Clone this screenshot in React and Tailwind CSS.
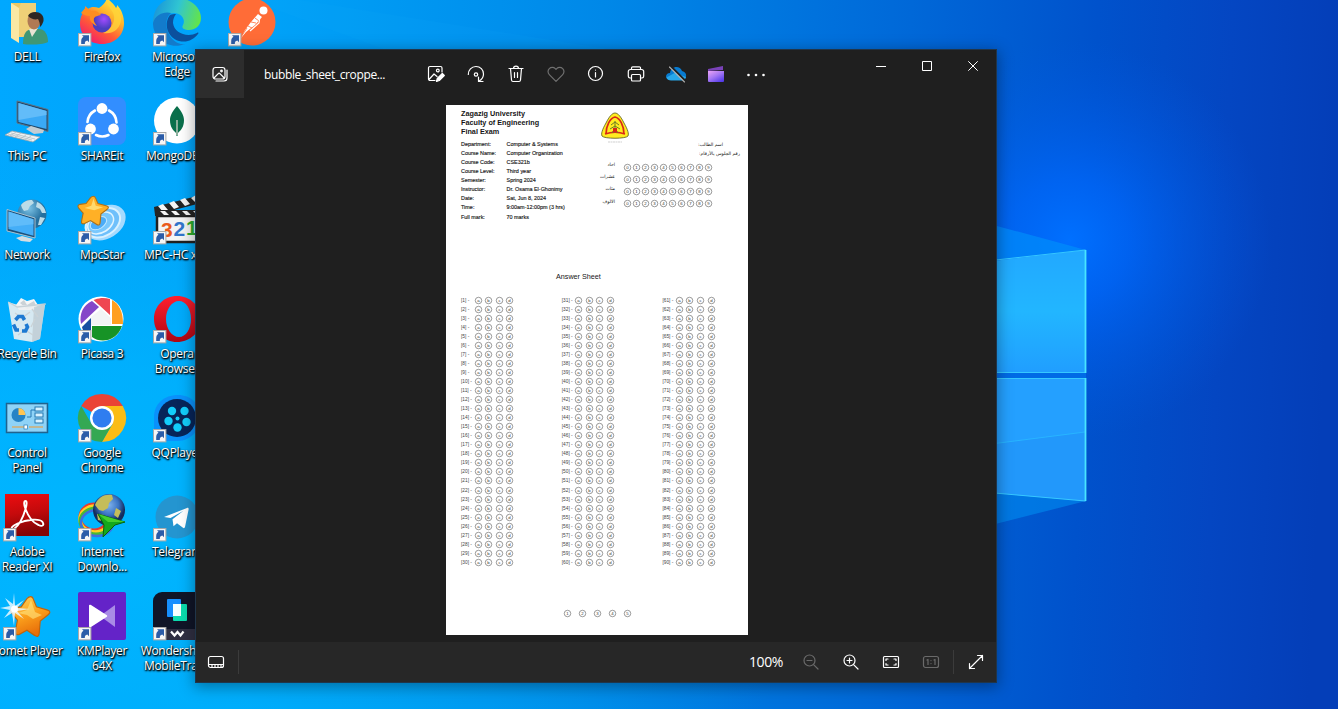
import React from "react";

const Svg48 = ({ children, shortcut }) => (
  <svg viewBox="0 0 48 48" className="h-12 w-12 shrink-0 overflow-visible">
    {children}
    {shortcut && (
      <g>
        <rect x="0.5" y="35.5" width="12.4" height="12.4" fill="#f6f6f6" stroke="#a9a9a9" />
        <path d="M3.200 46V43.500c0-2.600.8-4 2.300-4.700L4 37.300h7v7L9.300 42.600C7.500 43 6.800 44 6.800 46z" fill="#2b5ca8" />
      </g>
    )}
  </svg>
);

const UserFolder = () => (
  <Svg48>
    <path d="M8 5h25v34H14z" fill="#e9c766" />
    <path d="M8 5l8 5v35l-8-5z" fill="#fbe8a4" />
    <path d="M16 10l2-5h15v34H16z" fill="#efd077" />
    <path d="M20 46c0-10 3-15 10-15h6c6 0 9 6 9 13-6 3-19 3-25 2z" fill="#3f9775" />
    <path d="M26 31l3 8 6-9z" fill="#e9e3d4" />
    <ellipse cx="31" cy="23" rx="6.500" ry="8.500" fill="#b07a54" />
    <path d="M25 18c2-6 17-6 15.500 5-1 3-2 5-3.500 6 0-4-1-6-2-8-3 1-7 0-10-3z" fill="#2f2722" />
  </Svg48>
);

const ThisPC = () => (
  <Svg48>
    <path d="M14 4l31 8.500v22L14 26z" fill="#21496b" />
    <path d="M15.500 6l28 8v18L15.500 25z" fill="#3aa9f6" />
    <path d="M15.500 6l28 8v4L15.500 23z" fill="#62bcf9" />
    <path d="M14 4l31 8.500v22L14 26z" fill="none" stroke="#5b7387" />
    <path d="M23 32l5-3 13 4-1 3-9 1z" fill="#c4cdd3" />
    <path d="M2 38l7-4 28 6-7 5z" fill="#eef2f4" stroke="#95a3ab" strokeWidth=".8" />
    <path d="M5 37l24 6M8 36l24 6M13 35l-6 4M18 36l-6 4M23 38l-6 4M28 39l-6 4" stroke="#aeb9bf" strokeWidth=".7" />
  </Svg48>
);

const Network = () => (
  <Svg48>
    <defs>
      <radialGradient id="net" cx=".4" cy=".3">
        <stop offset="0" stopColor="#7cc3e6" />
        <stop offset="1" stopColor="#256f9e" />
      </radialGradient>
    </defs>
    <circle cx="29" cy="18" r="14.500" fill="url(#net)" />
    <path d="M18 9c3-4 7-5 11-5l2 3-4 3-2 4-4 1-2-3zM34 6c5 2 8 6 9 11l-4 0-2-4-4-2zM37 21l5 1-4 7-3 0z" fill="#bcdce8" />
    <path d="M4 13.500l28 8.500v20L4 35z" fill="#1e4f78" stroke="#a9c3d2" />
    <path d="M5.500 15.500l25 7.700v16.500L5.500 33z" fill="#44aef8" />
    <path d="M5.500 15.500l25 7.700v5L5.500 31z" fill="#6cc2fb" opacity=".7" />
    <path d="M13 42l6-2 11 3-3 3-9-1z" fill="#d5dde1" />
  </Svg48>
);

const RecycleBin = () => (
  <Svg48>
    <path d="M13 10l5-7 6 3 7-2 4 6-4 5H16z" fill="#f4f6f7" />
    <path d="M17 8l4-3 3 5 7-4 2 5-9 3z" fill="#cbd2d6" />
    <path d="M5 7l10 3h27l-5 34-8 3-18-3z" fill="#edf0f1" opacity=".9" />
    <path d="M5 7l10 5 31-3" transform="scale(.92 1) translate(.5 0)" fill="none" stroke="#c7d2d8" strokeWidth="1.300" />
    <path d="M31 12l11-3-5 35-8 3z" fill="#b9c5cb" opacity=".65" />
    <path d="M12 18l7 5 8-6M29 14l6 8M15 40l7-5 8 5M32 24l-4 8" fill="none" stroke="#cbd3d7" strokeWidth="1.400" />
    <path d="M12.500 25l3-3.500h4l2 3.500M10.500 29.500l2.500 5.500h3M19 36h3.500l2-4-1.500-3" fill="none" stroke="#1d79d2" strokeWidth="3.600" />
  </Svg48>
);

const ControlPanel = () => (
  <Svg48>
    <rect x="3.500" y="9.500" width="41" height="29" fill="#7cc7ef" stroke="#20638e" strokeWidth="1.500" />
    <rect x="5" y="11" width="38" height="26" fill="#8fd3f7" />
    <circle cx="15.500" cy="21" r="7" fill="#2583c5" />
    <path d="M15.500 21v-7a7 7 0 017 7z" fill="#ffc552" />
    <path d="M24 23h4v-7h4" fill="none" stroke="#267bb5" />
    <rect x="32" y="13" width="8" height="4" fill="#d8f2ff" stroke="#2479b1" />
    <rect x="32" y="19" width="8" height="4" fill="#d8f2ff" stroke="#2479b1" />
    <rect x="32" y="25" width="8" height="4" fill="#d8f2ff" stroke="#2479b1" />
    <path d="M9 33h13M26 33h14" stroke="#f39b32" strokeWidth="1.200" />
    <rect x="21" y="31" width="3.500" height="4" fill="#fff" stroke="#267bb5" strokeWidth=".7" />
  </Svg48>
);

const Adobe = () => (
  <Svg48 shortcut>
    <defs>
      <linearGradient id="adobe" x1="0" y1="0" x2="0.200" y2="1">
        <stop offset="0" stopColor="#ee0c10" />
        <stop offset=".5" stopColor="#c50a0c" />
        <stop offset="1" stopColor="#830405" />
      </linearGradient>
    </defs>
    <rect x="2" y="1" width="44" height="42" fill="url(#adobe)" />
    <path d="M11 36c4-3 9-11 11.500-20 1.500-5 1.500-8 0-8s-2 3 0 8c3 8 8 14 13 16 4 2 6 0 4-3-3-4-16-2.500-25 1.500-5 2.500-6.500 4-5.500 5.500" fill="none" stroke="#fff" strokeWidth="1.900" strokeLinecap="round" />
  </Svg48>
);

const starPath = "M25 5c1.500 0 2.300 1 3 3l3 7 11 3c4 1 4 3 1 5l-8 6-1 11c0 4-2 5-5 3l-8-5-8 4c-3 1-5 0-4-4l2-10-6-7c-2-3-1-4 2-5l8-1 6-8c1-1 2-2 4-2z";

const CometPlayer = () => (
  <Svg48 shortcut>
    <defs>
      <linearGradient id="comet" x1="0" y1="0" x2="0.400" y2="1">
        <stop offset="0" stopColor="#ffd864" />
        <stop offset=".55" stopColor="#fba01c" />
        <stop offset="1" stopColor="#e8700a" />
      </linearGradient>
    </defs>
    <g transform="translate(4 -.500) scale(.95 1.020)">
      <path d={starPath} fill="url(#comet)" stroke="#bf640d" strokeWidth="1.200" />
    </g>
    <path d="M28 8l-4 10-9 3 9 2 6 4 9-4-7-3z" fill="#ffe680" opacity=".6" />
    <path d="M11 1l1 13 9-6-7 8 13 1-13 2 7 8-9-6-1 13-2-13-8 5 6-8-10-2 10-2-5-8 8 6z" fill="#e9f8ff" opacity=".85" />
    <circle cx="11.500" cy="17" r="3.500" fill="#fff" />
  </Svg48>
);

const Firefox = () => (
  <Svg48 shortcut>
    <defs>
      <linearGradient id="ff" x1=".85" y1="0" x2=".2" y2="1">
        <stop offset="0" stopColor="#fff44a" />
        <stop offset=".35" stopColor="#ffb32a" />
        <stop offset=".65" stopColor="#ff5b36" />
        <stop offset="1" stopColor="#f01472" />
      </linearGradient>
      <radialGradient id="ffp" cx=".6" cy=".3">
        <stop offset="0" stopColor="#a24bff" />
        <stop offset="1" stopColor="#4a3fbf" />
      </radialGradient>
    </defs>
    <path d="M29 0c4 4 7 6 9 10 1-1 1-2 1-3 5 5 7 12 7 18 0 12-9 21-22 21S2 37 2 26c0-6 2-11 5-14V8l3 3c4-3 7-2 11-1 4-3 7-6 8-10z" fill="url(#ff)" />
    <circle cx="24" cy="25" r="9.500" fill="url(#ffp)" />
    <path d="M3 15l5-6 5 4c4-1 7 0 10 4-3 1-6 1-7 3-1 3 1 5 3 8-5-2-8-6-7-10-4 0-6-1-9-3z" fill="#ff8d20" />
    <path d="M28 0c-1 7 7 11 8 18 1 7-4 15-11 17 10 2 18-5 18-14 0-7-5-10-7-13-2-2-5-4-8-8z" fill="#ffd43a" opacity=".8" />
  </Svg48>
);

const ShareIt = () => (
  <Svg48 shortcut>
    <rect width="48" height="48" rx="8" fill="#328eff" />
    <g fill="none" stroke="#fff" strokeWidth="2.600" strokeLinecap="round">
      <path d="M31 13.500a14.500 14.500 0 017.500 12" />
      <path d="M17 13.500A14.500 14.500 0 009.500 25" />
      <path d="M18 38a14.500 14.500 0 0012.500 0" />
    </g>
    <circle cx="24" cy="11.500" r="5.400" fill="#fff" />
    <circle cx="12.500" cy="32" r="5.400" fill="#fff" />
    <circle cx="35.500" cy="32" r="5.400" fill="#fff" />
  </Svg48>
);

const MpcStar = () => (
  <Svg48 shortcut>
    <g transform="rotate(-32 28 26)">
      <ellipse cx="27" cy="26" rx="22" ry="16" fill="#a5dafe" />
      <ellipse cx="25" cy="25" rx="18.500" ry="13" fill="#6fc0fb" stroke="#d8f1ff" strokeWidth="2" />
      <ellipse cx="23" cy="24" rx="14" ry="9.500" fill="#79c8fd" stroke="#e1f4ff" strokeWidth="1.500" />
      <ellipse cx="21" cy="23" rx="9" ry="5.500" fill="#4cacf7" stroke="#c1e8ff" />
    </g>
    <g transform="translate(-3 -3.500) scale(.74)">
      <path d={starPath} fill="#ffb026" stroke="#b07014" strokeWidth="1.500" />
      <path d="M25 8l3 10 10 2-12 4-13-3 9-3z" fill="#ffe27a" opacity=".85" />
    </g>
  </Svg48>
);

const Picasa = () => (
  <Svg48 shortcut>
    <circle cx="23" cy="24" r="22.500" fill="#fff" />
    <path d="M17 4.500c5-2 10-2 15-.5v16L15.500 5z" fill="#ef4651" />
    <path d="M34 5c7 4 11 11 11 24H34z" fill="#ff9f20" />
    <path d="M14 6l7 6L3 29C1 19 5 10 14 6z" fill="#8546c8" />
    <path d="M4 32l9-9v18C8 40 5 37 4 32z" fill="#164fa2" />
    <path d="M14 31h30c-5 15-21 18-30 11z" fill="#179326" />
    <path d="M13 22l10-8 10 9v7H13z" fill="#f2f4f5" />
  </Svg48>
);

const Chrome = () => (
  <Svg48 shortcut>
    <path d="M24 24L3.200 12A24 24 0 0144.800 12z" fill="#ea4335" />
    <path d="M24 12h20.800A24 24 0 0124 48l10.400-18z" fill="#fbbc15" />
    <path d="M13.600 30L3.200 12A24 24 0 0024 48l10.400-18z" fill="#34a853" />
    <circle cx="24" cy="24" r="12" fill="#fff" />
    <circle cx="24" cy="24" r="9.600" fill="#2f7df0" />
  </Svg48>
);

const Idm = () => (
  <Svg48 shortcut>
    <defs>
      <radialGradient id="idm" cx=".5" cy=".35">
        <stop offset="0" stopColor="#7fb2ec" />
        <stop offset=".6" stopColor="#3a74c4" />
        <stop offset="1" stopColor="#152c5c" />
      </radialGradient>
    </defs>
    <ellipse cx="16" cy="24" rx="14" ry="13" fill="none" stroke="#ea392e" strokeWidth="3" />
    <ellipse cx="17" cy="26" rx="15" ry="13" fill="none" stroke="#ffcf22" strokeWidth="3.500" />
    <ellipse cx="18" cy="28" rx="16" ry="13" fill="none" stroke="#46b936" strokeWidth="3" />
    <ellipse cx="19" cy="30" rx="16" ry="13" fill="none" stroke="#3e70de" strokeWidth="2.500" />
    <circle cx="31" cy="17" r="16" fill="url(#idm)" />
    <path d="M17 12c3-8 10-11 17-10l1 4-4 4-1 5-5 3-4-1zM19 21l7 1-2 6-4-1zM38 15l5 3-3 7-4-3z" fill="#c4bd5a" />
    <path d="M20 21l27 8-10 3-12 12 1-12z" fill="#13a81d" stroke="#08620d" />
    <path d="M20 21l27 8-17 0z" fill="#43cf2e" />
  </Svg48>
);

const KmPlayer = () => (
  <Svg48 shortcut>
    <rect width="48" height="48" rx="2" fill="#6423c8" />
    <path d="M37 13v22L22 24z" fill="#a98be6" />
    <path d="M11 13.500c0-1 1-1 2-.5l15.500 10c1 .6 1 1.300 0 2L13 35c-1 .5-2 .3-2-.7z" fill="#fff" />
  </Svg48>
);

const Edge = () => (
  <Svg48 shortcut>
    <defs>
      <linearGradient id="edge" x1="0" y1=".3" x2="1" y2=".5">
        <stop offset="0" stopColor="#1994d8" />
        <stop offset=".5" stopColor="#30c5d2" />
        <stop offset="1" stopColor="#63e34c" />
      </linearGradient>
    </defs>
    <path d="M0 25C0 9 10 0 24 0s24 10 24 20c0 8-6 12-12 12-5 0-8-2-6-5 3-6-2-12-9-12C11 15 3 20 0 25z" fill="url(#edge)" />
    <path d="M0 25c2-8 11-12 18-10-5 4-6 12-3 19 3 8 10 13 17 12-15 6-32-4-32-21z" fill="#137bcb" />
    <path d="M17 17c-6 7-4 22 9 26 8 2 14-1 19-7 1-1 0-2-1-1-10 5-23 0-24-10 0-4 1-6 3-9-2 0-4 0-6 1z" fill="#0b509d" />
  </Svg48>
);

const Mongo = () => (
  <Svg48 shortcut>
    <circle cx="24" cy="23.500" r="23" fill="#fff" />
    <path d="M24 9c4 5 7 9 7 14 0 7-3 10-6 13l-.5 3h-1L23 36c-3-3-6-6-6-13 0-5 3-9 7-14z" fill="#0a6f4b" />
    <path d="M24 23v15" stroke="#9ab5a4" strokeWidth="1.800" />
  </Svg48>
);

const MpcHc = () => (
  <Svg48 shortcut>
    <path d="M4 20h50v26H4z" fill="#f4f4f4" stroke="#202020" strokeWidth="2.500" />
    <path d="M1 11L48-1v8L2 19z" fill="#242424" />
    <path d="M5 10l5 6 5-2-5-6zM16 7l5 6 5-2-5-6zM27 4l5 6 5-2-5-6zM38 2l5 5 5-2-5-6z" fill="#f5f5f5" />
    <path d="M2 14h50v6H2z" fill="#252525" />
    <path d="M7 15l4 4h5l-4-4zM18 15l4 4h5l-4-4zM29 15l4 4h5l-4-4zM40 15l4 4h5l-4-4z" fill="#f5f5f5" />
    <g fontFamily="Liberation Sans, sans-serif" fontSize="21" fontWeight="700">
      <text x="8" y="41" fill="#ea5a1a">3</text>
      <text x="20.500" y="39.500" fill="#3374cb">2</text>
      <text x="33" y="38.500" fill="#2eab2c">1</text>
    </g>
  </Svg48>
);

const Opera = () => (
  <Svg48 shortcut>
    <defs>
      <linearGradient id="op" x1="0" y1="0" x2="0" y2="1">
        <stop offset="0" stopColor="#ff1f2e" />
        <stop offset="1" stopColor="#ad0714" />
      </linearGradient>
    </defs>
    <path fillRule="evenodd" d="M24 1C11 1 1 11 1 24s10 23 23 23 24-10 24-23S37 1 24 1zm2 5c7 0 12 8 12 18s-5 18-12 18-13-8-13-18S19 6 26 6z" fill="url(#op)" />
  </Svg48>
);

const QqPlayer = () => (
  <Svg48 shortcut>
    <path d="M25 1c13 0 22 9 22 22s-9 24-23 24H10L1 35V23C1 10 11 1 25 1z" fill="#0a91fb" />
    <circle cx="24" cy="24" r="19" fill="#072559" />
    <g fill="#12cdfb">
      <circle cx="19" cy="17" r="4.200" />
      <circle cx="31.500" cy="17" r="4.200" />
      <circle cx="15.500" cy="27" r="4.200" />
      <circle cx="33.500" cy="28" r="4.200" />
      <circle cx="24.500" cy="33.500" r="4.200" />
      <circle cx="24.500" cy="24.500" r="2" />
    </g>
  </Svg48>
);

const Telegram = () => (
  <Svg48 shortcut>
    <circle cx="24" cy="24" r="21.500" fill="#2495d0" />
    <path d="M11 24l23-9c1-.4 2 0 1.500 2L32 34c-.3 1.200-1.200 1.500-2 .8l-6-4.500-3.500 3-1-7 11-8.500-13 7.300z" fill="#fff" />
  </Svg48>
);

const MobileTrans = () => (
  <Svg48 shortcut>
    <rect width="52" height="48" rx="9" fill="#101528" />
    <path d="M0 37h52v4c0 4-3 7-7 7H7c-4 0-7-3-7-7z" fill="#303043" />
    <rect x="14" y="7" width="14" height="18" rx="1" fill="#168fff" />
    <rect x="20" y="12" width="14" height="17" rx="1" fill="#0bdbae" />
    <rect x="20" y="12" width="8" height="12" fill="#f5ffff" />
    <path d="M18 39.500l3.500 4 3-3.500 3 3.500 3-4" fill="none" stroke="#fff" strokeWidth="2.200" />
  </Svg48>
);

const Postman = () => (
  <Svg48 shortcut>
    <circle cx="24" cy="24" r="23.500" fill="#ff6c37" />
    <circle cx="35.500" cy="12.500" r="4" fill="#fff" />
    <path d="M30 16l4 3-7 8-9 7-5 6 4-8 6-8z" fill="#fff" />
    <path d="M23 24l5 1M20 28l4 2M27 20l4 3M13 39l6-9" stroke="#ff6c37" strokeWidth=".8" />
    <path d="M32 18l-1 7-9 8" fill="none" stroke="#fff" strokeWidth="1.200" />
  </Svg48>
);

const desktop = [
  [
    [UserFolder, ["DELL"]],
    [ThisPC, ["This PC"]],
    [Network, ["Network"]],
    [RecycleBin, ["Recycle Bin"]],
    [ControlPanel, ["Control", "Panel"]],
    [Adobe, ["Adobe", "Reader XI"]],
    [CometPlayer, ["Comet Player"]],
  ],
  [
    [Firefox, ["Firefox"]],
    [ShareIt, ["SHAREit"]],
    [MpcStar, ["MpcStar"]],
    [Picasa, ["Picasa 3"]],
    [Chrome, ["Google", "Chrome"]],
    [Idm, ["Internet", "Downlo..."]],
    [KmPlayer, ["KMPlayer", "64X"]],
  ],
  [
    [Edge, ["Microsoft", "Edge"]],
    [Mongo, ["MongoDB..."]],
    [MpcHc, ["MPC-HC x64"]],
    [Opera, ["Opera", "Browser"]],
    [QqPlayer, ["QQPlayer"]],
    [Telegram, ["Telegram"]],
    [MobileTrans, ["Wondershare", "MobileTrans"]],
  ],
  [[Postman, []]],
];

const DesktopIcon = ({ Icon, lines }) => (
  <div className="flex h-[99px] w-[75px] flex-col items-center">
    <Icon />
    <div className="mt-[3px] flex flex-col items-center text-[12px] leading-[15px] tracking-[-0.300px] whitespace-nowrap text-white [text-shadow:1px_1px_2px_#000,0_1px_2px_#000,1px_1px_1px_#000a]">
      {lines.map((l) => (
        <span key={l}>{l}</span>
      ))}
    </div>
  </div>
);

const Wallpaper = () => (
  <svg viewBox="0 0 1338 709" className="absolute inset-0 h-[709px] w-[1338px]">
    <defs>
      <linearGradient id="base" x1="0" y1="0" x2="1338" y2="60" gradientUnits="userSpaceOnUse">
        <stop offset="0" stopColor="#00a8ff" />
        <stop offset=".2" stopColor="#00a2f8" />
        <stop offset=".45" stopColor="#0088e8" />
        <stop offset=".68" stopColor="#0068d8" />
        <stop offset=".82" stopColor="#0052cc" />
        <stop offset=".92" stopColor="#0446c2" />
        <stop offset="1" stopColor="#043eb8" />
      </linearGradient>
      <radialGradient id="glow" cx="1070" cy="240" r="200" gradientUnits="userSpaceOnUse">
        <stop offset="0" stopColor="#0070ff" />
        <stop offset=".3" stopColor="#0068fc" stopOpacity=".75" />
        <stop offset="1" stopColor="#0058e0" stopOpacity="0" />
      </radialGradient>
      <linearGradient id="pane" x1="0" y1="250" x2="0" y2="373" gradientUnits="userSpaceOnUse">
        <stop offset="0" stopColor="#22a8ff" />
        <stop offset=".5" stopColor="#22b6ff" />
        <stop offset="1" stopColor="#209eff" />
      </linearGradient>
      <radialGradient id="floor" cx="0" cy="0" r="1" gradientUnits="userSpaceOnUse" gradientTransform="translate(100 540) scale(720 430)">
        <stop offset="0" stopColor="#00baff" stopOpacity=".8" />
        <stop offset=".4" stopColor="#00b8ff" stopOpacity=".55" />
        <stop offset="1" stopColor="#00a8f0" stopOpacity="0" />
      </radialGradient>
    </defs>
    <rect width="1338" height="709" fill="url(#base)" />
    <rect width="1338" height="709" fill="url(#floor)" />
    <path d="M250 0l190 70h300L300 0z" fill="#20b4ff" opacity=".07" />
    <rect width="1338" height="709" fill="url(#glow)" />
    <path d="M960 216l126 34-126 15z" fill="#0090fa" opacity=".65" />
    <path d="M960 490l126 11-126 32z" fill="#008cf0" opacity=".6" />
    <path d="M960 369h126v12H960z" fill="#006be6" />
    <path d="M960 265l126-15v123H960z" fill="url(#pane)" />
    <path d="M960 378h126v123l-126-11z" fill="#24a0ff" />
    <path d="M960 448l126-16v69l-126-11z" fill="#2298fb" />
    <g fill="none" stroke="#36c8ff">
      <path d="M960 264l125.500-14v122.500H960" />
      <path d="M960 378.500h125.500V501L960 490" />
      <path d="M960 448l125-16" stroke="#28b4ff" />
      <path d="M1085.500 250v123M1085.500 378v123" strokeWidth="1.800" stroke="#48e4ff" />
    </g>
  </svg>
);

const Tool = ({ children, size = 18, color = "#fff" }) => (
  <div className="flex h-12 w-10 items-center justify-center">
    <svg width={size} height={size} viewBox={`0 0 ${size} ${size}`} fill="none" stroke={color} strokeWidth="1.200" strokeLinecap="round" strokeLinejoin="round">
      {children}
    </svg>
  </div>
);

const Toolbar = () => (
  <div className="flex">
    <Tool>
      <path d="M8 15.500H3A1.500 1.500 0 011.500 14V3A1.500 1.500 0 013 1.500h10.500A1.500 1.500 0 0115 3v4M2 14.500l5-5.500 3 2.500" />
      <circle cx="10.800" cy="5.500" r="1.400" />
      <path d="M9.500 16.500l.8-3 5-5 2 2-5 5z" fill="#fff" />
    </Tool>
    <Tool>
      <path d="M1.300 9.500A7.600 7.600 0 019 1.500c4.300 0 7.500 3.300 7.500 7.500 0 3-1.500 5.500-4.500 7M11.500 12v4.500H16" />
      <circle cx="9" cy="9.500" r="1.700" />
    </Tool>
    <Tool>
      <path d="M2 3.500h14M6.500 3.500a2.500 2.300 0 015 0M3.500 3.500l1 11.500c.1 1 .8 1.500 1.500 1.500h6c.8 0 1.400-.6 1.500-1.500l1-11.500M7.500 7.500v5M10.500 7.500v5" />
    </Tool>
    <Tool color="#707070">
      <path d="M9 16.300L2.300 9.600a4.200 4.200 0 010-6 4.200 4.200 0 016 0L9 4.400l.7-.8a4.200 4.200 0 016 0 4.200 4.200 0 010 6z" />
    </Tool>
    <Tool>
      <circle cx="8.500" cy="8.500" r="7" />
      <path d="M8.500 7.500v4.500M8.500 5v.1" />
    </Tool>
    <Tool>
      <path d="M4.500 4.500V3A1.200 1.200 0 015.700 1.800h6.600A1.200 1.200 0 0113.500 3v1.500M4.500 13H3a1.800 1.800 0 01-1.700-1.700V6.500A2 2 0 013.300 4.500h11.400a2 2 0 012 2v4.800A1.800 1.800 0 0115 13h-1.500" />
      <rect x="4.500" y="9.500" width="9" height="6.500" rx="1" />
    </Tool>
    <Tool size={22}>
      <path d="M6 17c-7 0-6-7-1-7C6 3 15 2 17 8c6 1 5 9 0 9z" fill="#087bd0" stroke="none" />
      <path d="M1.500 14.500l8-4.500 11.500 4c-.5 2-2 3.500-4 3.500H6c-2 0-4-1-4.500-3z" fill="#28a8ea" stroke="none" />
      <path d="M6 3.500l14 14" stroke="#1f1f1f" strokeWidth="2" />
      <path d="M4.500 4l15 15" stroke="#b0b0b0" strokeWidth="1.100" />
    </Tool>
    <Tool>
      <defs>
        <linearGradient id="clip" x1="0" y1="0" x2=".8" y2="1">
          <stop offset="0" stopColor="#eaa4f4" />
          <stop offset=".5" stopColor="#a678f4" />
          <stop offset="1" stopColor="#533bea" />
        </linearGradient>
      </defs>
      <path d="M1 4L16 1v4L1 6z" fill="#7a42b8" stroke="none" />
      <path d="M1 6h16v10a1 1 0 01-1 1H2a1 1 0 01-1-1z" fill="url(#clip)" stroke="none" />
    </Tool>
    <Tool size={20}>
      <g fill="#fff" stroke="none">
        <circle cx="2.500" cy="11" r="1.300" />
        <circle cx="10" cy="11" r="1.300" />
        <circle cx="17.500" cy="11" r="1.300" />
      </g>
    </Tool>
  </div>
);

const Bubble = ({ label, size = 9 }) => (
  <svg width={size} height={size} viewBox="0 0 9 9" className="shrink-0">
    <circle cx="4.500" cy="4.500" r="3.250" fill="none" stroke="#707070" strokeWidth=".7" />
    <text x="4.500" y="6" textAnchor="middle" fontFamily="Liberation Sans, sans-serif" fontSize="4.300" fill="#333">
      {label}
    </text>
  </svg>
);

const details = [
  ["Department:", "Computer & Systems"],
  ["Course Name:", "Computer Organization"],
  ["Course Code:", "CSE321b"],
  ["Course Level:", "Third year"],
  ["Semester:", "Spring 2024"],
  ["Instructor:", "Dr. Osama El-Ghonimy"],
  ["Date:", "Sat, Jun 8, 2024"],
  ["Time:", "9:00am-12:00pm (3 hrs)"],
  ["Full mark:", "70 marks"],
];

const Crest = () => (
  <svg viewBox="0 0 28 32" className="h-8 w-7 shrink-0">
    <path d="M14 1c3 0 6 4 9 10 4 7 5 11 4 13-2 3-24 3-26 0-1-2 0-6 4-13C8 5 11 1 14 1z" fill="#ffec20" stroke="#57551b" strokeWidth=".8" />
    <path d="M5 22C5 14 9 6 14 5c5 1 9 9 9 17" fill="none" stroke="#d92718" strokeWidth="1.700" />
    <path d="M4 22c6-2 14-2 20 0" fill="none" stroke="#d92718" strokeWidth="1.500" />
    <path d="M14 9v12M10 13l4-3 4 3M9 17l5-3 5 3M11 21l3-5 3 5" stroke="#6b7d25" fill="none" />
    <path d="M12 16h4v4h-4z" fill="#d92718" />
    <path d="M7 30h14" stroke="#bbb" strokeWidth=".7" strokeDasharray="2 .5" />
  </svg>
);

const Sheet = () => (
  <div className="flex h-[530px] w-[302px] flex-col bg-white pl-[15px] font-['Liberation_Sans',sans-serif] text-[#161616]">
    <div className="flex h-[161px]">
      <div className="w-[140px] shrink-0 pt-[3.700px]">
        <div className="text-[7.250px] leading-[9.050px] font-bold whitespace-nowrap">
          <div>Zagazig University</div>
          <div>Faculty of Engineering</div>
          <div>Final Exam</div>
        </div>
        <div className="mt-[4.300px] text-[5.450px] leading-[9.050px] whitespace-nowrap [-webkit-text-stroke:0.150px_#222]">
          {details.map(([k, v]) => (
            <div key={k} className="flex">
              <span className="w-[45.500px] shrink-0">{k}</span>
              <span>{v}</span>
            </div>
          ))}
        </div>
      </div>
      <div className="flex shrink-0 flex-col pt-[7px]">
        <div className="flex h-[49.700px]">
          <Crest />
          <div className="mt-[28px] ml-[74px] flex flex-col items-start text-[4.600px] leading-[9px] whitespace-nowrap font-['DejaVu_Sans',sans-serif]">
            <div className="flex w-[20px] justify-end"><span dir="rtl">اسم الطالب:</span></div>
            <div className="flex w-[37px] justify-end"><span dir="rtl">رقم الجلوس بالأرقام:</span></div>
          </div>
        </div>
        {["احاد", "عشرات", "مئات", "الالوف"].map((w) => (
          <div key={w} className="flex h-[12.100px] items-center">
            <span dir="rtl" className="-mt-1 w-[14px] shrink-0 text-[4.600px] whitespace-nowrap font-['DejaVu_Sans',sans-serif]">{w}</span>
            <div className="ml-[7.500px] flex">
              {[0, 1, 2, 3, 4, 5, 6, 7, 8, 9].map((n) => (
                <Bubble key={n} label={n} size={9.07} />
              ))}
            </div>
          </div>
        ))}
      </div>
    </div>
    <div className="mt-[5.500px] ml-[95px] text-[7.200px] leading-[10px]">Answer Sheet</div>
    <div className="mt-[14px] flex">
      {[0, 30, 60].map((start) => (
        <div key={start} className="w-[100.700px] shrink-0">
          {Array.from({ length: 30 }, (_, i) => (
            <div key={i} className="flex h-[9.050px] items-center">
              <span className="w-[12.500px] shrink-0 text-[4.800px] leading-[9px] whitespace-nowrap text-[#444]">[{start + i + 1}] -</span>
              <div className="flex gap-[1.600px]">
                {["a", "b", "c", "d"].map((c) => (
                  <Bubble key={c} label={c} />
                ))}
              </div>
            </div>
          ))}
        </div>
      ))}
    </div>
    <div className="mt-[42px] ml-[101.500px] flex gap-[6.100px]">
      {[1, 2, 3, 4, 5].map((n) => (
        <Bubble key={n} label={n} />
      ))}
    </div>
  </div>
);

const WindowButtons = () => (
  <div className="flex h-8">
    {["M0 5.500h10", "M.5.500h9v9H.5z", "M.3.300l9.400 9.400M9.700.300L.3 9.700"].map((d) => (
      <div key={d} className="flex h-8 w-[46px] items-center justify-center">
        <svg width="10" height="10" viewBox="0 0 10 10" fill="none" stroke="#fff" strokeWidth="1">
          <path d={d} />
        </svg>
      </div>
    ))}
  </div>
);

const StatusBar = () => (
  <div className="flex h-10 items-center bg-[#272727]">
    <Tool>
      <rect x="1.500" y="3.500" width="15" height="11" rx="2" />
      <path d="M2 11.500h14M5 12v2M8 12v2M11 12v2M14 12v2" />
    </Tool>
    <div className="ml-[2px] h-6 w-px bg-[#3b3b3b]" />
    <div className="-mt-px ml-auto w-[42px] text-[14px] tracking-[-0.400px] text-white">100%</div>
    <Tool color="#6a6a6a">
      <circle cx="7.500" cy="7.500" r="5.500" />
      <path d="M11.800 11.800L16 16M5 7.500h5" />
    </Tool>
    <Tool>
      <circle cx="7.500" cy="7.500" r="5.500" />
      <path d="M11.800 11.800L16 16M5 7.500h5M7.500 5v5" />
    </Tool>
    <Tool>
      <rect x="1.500" y="3.500" width="15" height="11" rx="1" />
      <path d="M4 7.500V6h2M12 6h2v1.500M14 10.500V12h-2M6 12H4v-1.500" />
    </Tool>
    <Tool color="#6a6a6a">
      <rect x="1.500" y="3.500" width="15" height="11" rx="2" />
      <path d="M5 7l1-.5V11.500M12 7l1-.5V11.500M9 7.500v.1M9 10.500v.1" />
    </Tool>
    <div className="ml-[2px] h-6 w-px bg-[#3b3b3b]" />
    <div className="w-[2px]" />
    <Tool>
      <path d="M2.500 15.500l13-13M10.500 2.500h5v5M2.500 10.500v5h5" />
    </Tool>
  </div>
);

export default function App() {
  return (
    <div className="relative h-[709px] w-[1338px] overflow-hidden font-['Open_Sans',sans-serif]">
      <Wallpaper />
      <div className="absolute -top-[2px] -left-[10.500px] flex">
        {desktop.map((col, i) => (
          <div key={i} className="flex flex-col">
            {col.map(([Icon, lines], j) => (
              <DesktopIcon key={j} Icon={Icon} lines={lines} />
            ))}
          </div>
        ))}
      </div>
      <div className="absolute top-[50px] left-[196px] flex h-[632px] w-[800px] flex-col bg-[#1f1f1f] shadow-[0_0_0_1px_#20354a,0_3px_14px_2px_rgba(0,0,0,0.35)]">
        <div className="flex h-12 shrink-0">
          <div className="flex h-12 w-12 items-center justify-center bg-[#2d2d2d]">
            <svg width="16" height="16" viewBox="0 0 16 16" fill="none" stroke="#fff" strokeWidth="1.200" strokeLinejoin="round" strokeLinecap="round">
              <rect x="1" y="1.500" width="12" height="11.500" rx="2.500" />
              <path d="M2 12l4-4.200c.7-.7 1.500-.7 2.200 0l4 4.200M15 4v8a3 3 0 01-3 3H4" />
              <circle cx="9.500" cy="5" r=".8" />
            </svg>
          </div>
          <div className="w-[152px] pt-[16px] pl-5 text-[12px] leading-[18px] tracking-[-0.370px] whitespace-nowrap text-white">bubble_sheet_croppe...</div>
          <div className="ml-[20px]">
            <Toolbar />
          </div>
          <div className="ml-auto">
            <WindowButtons />
          </div>
        </div>
        <div className="flex flex-1 justify-center pt-[7px] pl-[2px]">
          <Sheet />
        </div>
        <StatusBar />
      </div>
    </div>
  );
}
